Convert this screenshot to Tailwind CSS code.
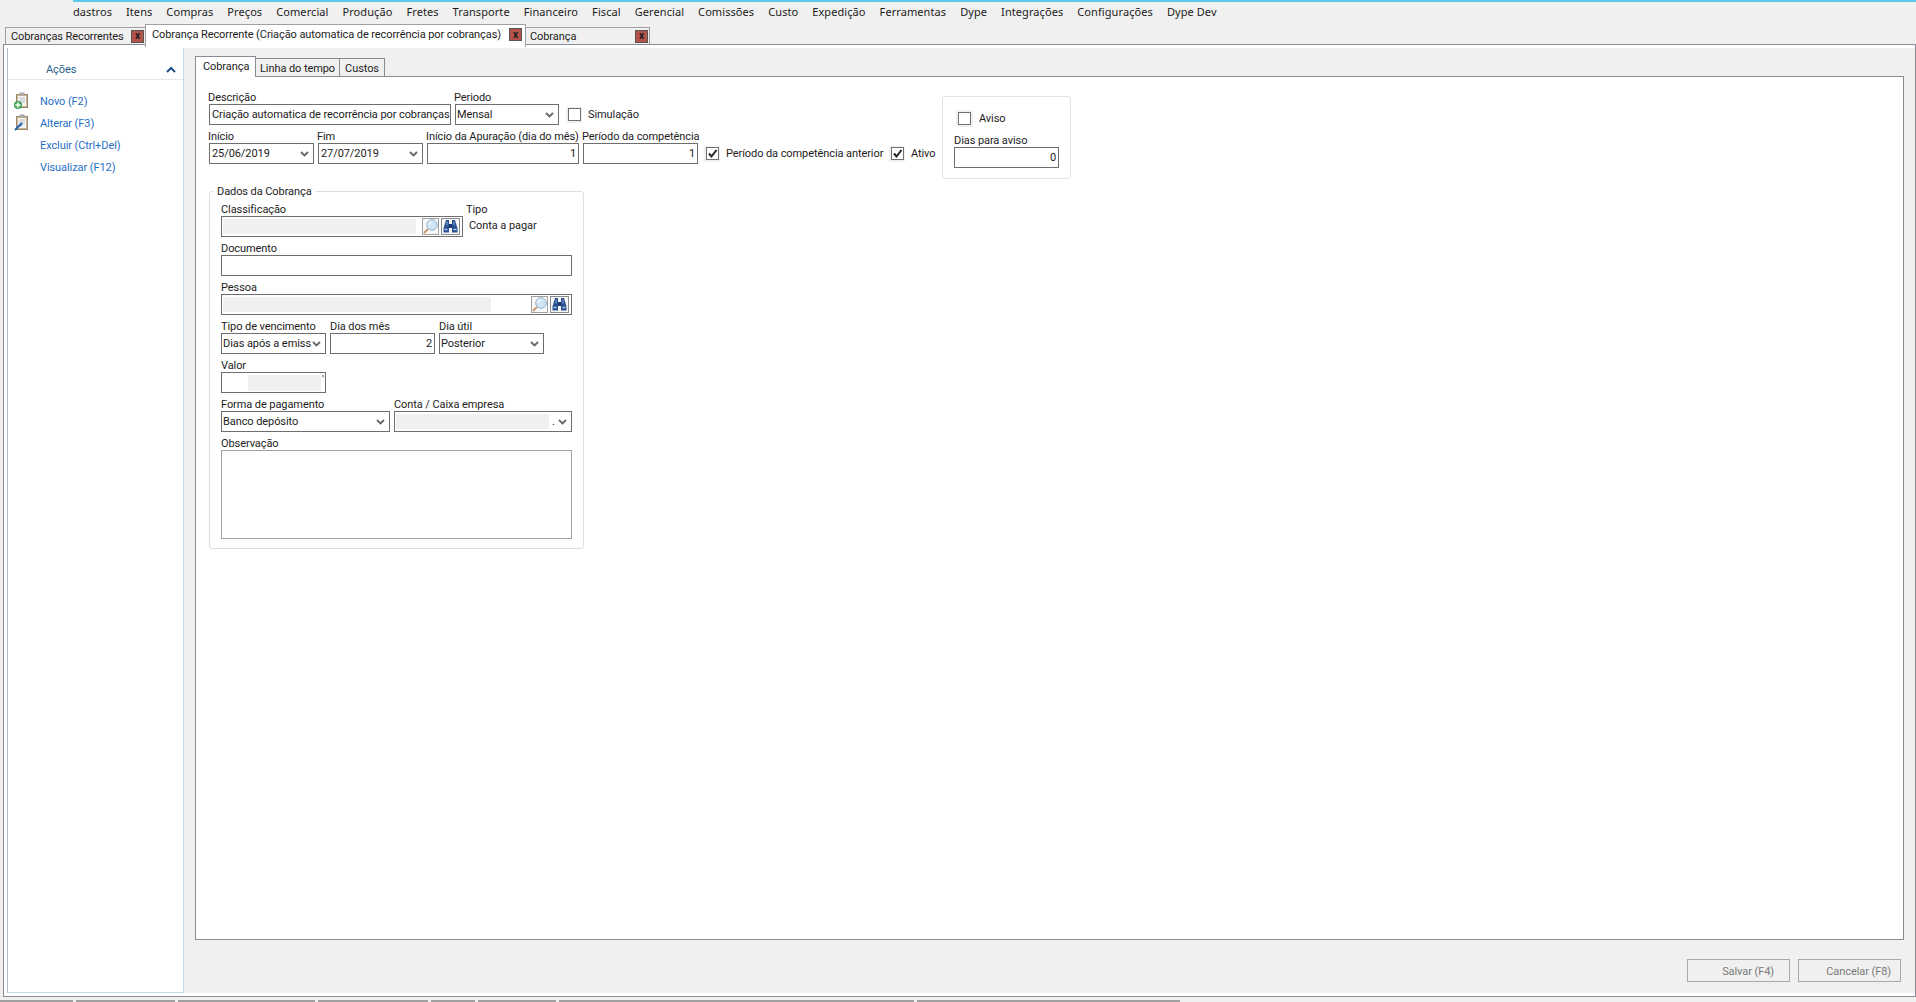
<!DOCTYPE html>
<html lang="pt-BR">
<head>
<meta charset="UTF-8">
<title>Cobrança Recorrente</title>
<script src="https://cdn.jsdelivr.net/npm/@tailwindcss/browser@4"></script>
</head>
<body class="w-[1916px] h-[1002px] overflow-hidden bg-[#f0f0f0] font-['Roboto',sans-serif] text-[11px] leading-[14px] tracking-[-0.08px] text-[#1c1c1c]">

<svg class="hidden">
  <symbol id="chev" viewBox="0 0 9 6"><path d="M1 1l3.500 3.500L8 1" fill="none" stroke="#666" stroke-width="1.800"/></symbol>
  <symbol id="tick" viewBox="0 0 11 11"><path d="M2 5.500l2.500 3L9.500 2" fill="none" stroke="#222" stroke-width="2"/></symbol>
  <symbol id="lupa" viewBox="0 0 15 15"><path d="M5 10L1 14" stroke="#c9966a" stroke-width="1.800"/><circle cx="9" cy="6" r="5.300" fill="#cfe5f6" stroke="#93b3cd"/><path d="M5.800 6a3.200 3.200 0 0 1 3.200-3.200" fill="none" stroke="#fff"/></symbol>
  <symbol id="bino" viewBox="0 0 17 15"><path d="M4 1h3v12.500H1.500v-4z" fill="#2a4f8f"/><path d="M10 1h3l2.500 8.500v4H10z" fill="#2a4f8f"/><rect x="7" y="5" width="3" height="4" fill="#1d3a70"/><path d="M2.500 10.500h3M11.500 10.500h3" stroke="#a9c8ec" stroke-width="1.500"/><path d="M5 2.500v4M12 2.500v4" stroke="#86abdc"/></symbol>
  <symbol id="clip" viewBox="0 0 14 16"><rect x="1.500" y="2.500" width="11" height="13" fill="#c9b48f" stroke="#9a8a6c"/><rect x="3" y="4" width="8" height="10" fill="#f6f6f2"/><rect x="4.500" y="0.500" width="5" height="3" fill="#a8a8a8"/><path d="M4 6h6M4 8h6M4 10h6M4 12h4" stroke="#bcc4cc"/></symbol>
</svg>

<!-- menu -->
<div class="h-[24px] ml-[73px] border-t-2 border-[#5ec8e8] pb-[2px] flex items-center gap-[14px] whitespace-nowrap font-['Noto_Sans',sans-serif] tracking-[0.08px]">
  <span>dastros</span><span>Itens</span><span>Compras</span><span>Preços</span><span>Comercial</span><span>Produção</span><span>Fretes</span><span>Transporte</span><span>Financeiro</span><span>Fiscal</span><span>Gerencial</span><span>Comissões</span><span>Custo</span><span>Expedição</span><span>Ferramentas</span><span>Dype</span><span>Integrações</span><span>Configurações</span><span>Dype Dev</span>
</div>

<!-- document tabs -->
<div class="h-[20px] pl-[5px] flex items-end relative z-10 whitespace-nowrap">
  <div class="w-[140px] h-[17px] border-l border-t border-[#a0a0a0] flex items-center pl-[5px]">
    <span class="w-[120px] pt-[2px]">Cobranças Recorrentes</span>
    <span class="w-[13px] h-[13px] bg-[#b5524b] border border-[#555] flex items-center justify-center text-[10px] font-bold leading-[10px]">x</span>
  </div>
  <div class="w-[381px] h-[23px] -mb-[3px] bg-white border-l border-r border-t border-[#a0a0a0] flex items-start pl-[6px] pt-[3px]">
    <span class="w-[357px]">Cobrança Recorrente (Criação automatica de recorrência por cobranças)</span>
    <span class="w-[13px] h-[13px] bg-[#b5524b] border border-[#555] flex items-center justify-center text-[10px] font-bold leading-[10px]">x</span>
  </div>
  <div class="w-[124px] h-[17px] border-r border-t border-[#a0a0a0] flex items-center pl-[4px]">
    <span class="w-[105px] pt-[2px]">Cobrança</span>
    <span class="w-[13px] h-[13px] bg-[#b5524b] border border-[#555] flex items-center justify-center text-[10px] font-bold leading-[10px]">x</span>
  </div>
</div>

<!-- frame -->
<div class="h-[953px] ml-[3px] border border-[#8a8a94] bg-white pl-[3px] pt-[3px] pb-[3px]">
  <div class="h-full bg-[#f0f0f0] flex">

    <!-- actions panel -->
    <aside class="w-[177px] h-full bg-white border-l border-r border-b border-l-[#b0bcc8] border-r-[#c5d8e5] border-b-[#c5d8e5] pt-[11px]">
      <div class="h-[21px] border-b border-[#e3e8ee] flex items-center justify-between pl-[38px] pr-[7px] text-[#2b5f8a]">
        <span class="pt-[2px]">Ações</span>
        <svg class="w-[10px] h-[7px]" viewBox="0 0 10 7"><path d="M1 6l4-4 4 4" fill="none" stroke="#1d4f86" stroke-width="2"/></svg>
      </div>
      <ul class="mt-[10px] text-[#1f6fc4]">
        <li class="h-[22px] flex items-center pl-[7px]">
          <span class="relative w-[14px] h-[16px] mr-[11px] -mt-[2px]"><svg class="w-[14px] h-[16px]"><use href="#clip"/></svg>
            <svg class="absolute -left-[1px] -bottom-[1px] w-[8px] h-[8px]" viewBox="0 0 8 8"><circle cx="4" cy="4" r="3.800" fill="#48b05c" stroke="#2b7d3c" stroke-width=".5"/><path d="M4 1.500v5M1.500 4h5" stroke="#fff" stroke-width="1.500"/></svg></span>
          <span class="pt-[2px]">Novo (F2)</span>
        </li>
        <li class="h-[22px] flex items-center pl-[7px]">
          <span class="relative w-[14px] h-[16px] mr-[11px] -mt-[2px]"><svg class="w-[14px] h-[16px]"><use href="#clip"/></svg>
            <svg class="absolute -left-[1px] -bottom-[1px] w-[9px] h-[9px]" viewBox="0 0 9 9"><path d="M1 8L8 1" stroke="#1f5fb0" stroke-width="2"/></svg></span>
          <span class="pt-[2px]">Alterar (F3)</span>
        </li>
        <li class="h-[22px] flex items-center pl-[32px]"><span class="pt-[2px]">Excluir (Ctrl+Del)</span></li>
        <li class="h-[22px] flex items-center pl-[32px]"><span class="pt-[2px]">Visualizar (F12)</span></li>
      </ul>
    </aside>

    <!-- main -->
    <main class="flex-1 pl-[11px] pr-[11px] pt-[8px]">
      <div class="h-[20px] flex items-end relative z-10 whitespace-nowrap">
        <div class="w-[61px] h-[21px] -mb-[1px] bg-white border-l border-t border-r border-[#8a8a94] pl-[7px] pt-[3px]">Cobrança</div>
        <div class="w-[84px] h-[18px] border-t border-r border-[#8a8a94] pt-[2px] flex items-center justify-center">Linha do tempo</div>
        <div class="w-[45px] h-[18px] border-t border-r border-[#8a8a94] pt-[2px] flex items-center justify-center">Custos</div>
      </div>

      <section class="h-[864px] border border-[#8a8a94] bg-white pl-[13px] pt-[13px]">
        <div class="flex items-start">
          <div class="w-[733px]">
            <div class="flex gap-[4px] items-end">
              <div class="w-[242px]"><label class="block h-[14px] leading-[16px] -ml-px whitespace-nowrap">Descrição</label><div class="h-[21px] border border-[#6e6e6e] px-[2px] flex items-center whitespace-nowrap overflow-hidden">Criação automatica de recorrência por cobranças</div></div>
              <div class="w-[104px]"><label class="block h-[14px] leading-[16px] -ml-px whitespace-nowrap">Periodo</label><div class="h-[21px] border border-[#6e6e6e] pl-[1px] pr-[4px] flex items-center justify-between">Mensal<svg class="w-[9px] h-[6px]"><use href="#chev"/></svg></div></div>
              <div class="h-[21px] flex items-center ml-[3px]">
                <span class="w-4 h-4 bg-[#f0f0f0] flex items-center justify-center"><span class="w-[13px] h-[13px] bg-white border border-[#707070]"></span></span>
                <span class="ml-[6px]">Simulação</span>
              </div>
            </div>
            <div class="flex gap-[4px] items-end mt-[4px] whitespace-nowrap">
              <div class="w-[105px]"><label class="block h-[14px] leading-[16px] -ml-px">Início</label><div class="h-[21px] border border-[#6e6e6e] pl-[2px] pr-[4px] flex items-center justify-between">25/06/2019<svg class="w-[9px] h-[6px]"><use href="#chev"/></svg></div></div>
              <div class="w-[105px]"><label class="block h-[14px] leading-[16px] -ml-px">Fim</label><div class="h-[21px] border border-[#6e6e6e] pl-[2px] pr-[4px] flex items-center justify-between">27/07/2019<svg class="w-[9px] h-[6px]"><use href="#chev"/></svg></div></div>
              <div class="w-[152px]"><label class="block h-[14px] leading-[16px] -ml-px">Início da Apuração (dia do mês)</label><div class="h-[21px] border border-[#6e6e6e] px-[2px] flex items-center justify-end">1</div></div>
              <div class="w-[115px]"><label class="block h-[14px] leading-[16px] -ml-px">Período da competência</label><div class="h-[21px] border border-[#6e6e6e] px-[2px] flex items-center justify-end">1</div></div>
              <div class="h-[21px] flex items-center ml-[2px]">
                <span class="w-4 h-4 bg-[#f0f0f0] flex items-center justify-center"><span class="w-[13px] h-[13px] bg-white border border-[#707070] flex"><svg class="w-[11px] h-[11px]"><use href="#tick"/></svg></span></span>
                <span class="ml-[6px] w-[163px]">Período da competência anterior</span>
                <span class="w-4 h-4 bg-[#f0f0f0] flex items-center justify-center"><span class="w-[13px] h-[13px] bg-white border border-[#707070] flex"><svg class="w-[11px] h-[11px]"><use href="#tick"/></svg></span></span>
                <span class="ml-[6px]">Ativo</span>
              </div>
            </div>

            <fieldset class="w-[375px] mt-[20px] border border-[#d8dfe6] rounded-[3px] pl-[11px] pr-[11px] pb-[9px] pt-[4px]">
              <legend class="-ml-[8px] px-[4px] h-[14px] leading-[16px]">Dados da Cobrança</legend>
              <div class="flex flex-col gap-[4px]">
                <div class="flex gap-[3px]">
                  <div class="w-[242px]"><label class="block h-[14px] leading-[16px]">Classificação</label>
                    <div class="h-[21px] border border-[#6e6e6e] flex items-center pl-[1px]">
                      <span class="w-[193px] h-[15px] bg-[#f0f0f0]"></span>
                      <span class="ml-[6px] w-[17px] h-[17px] border border-[#a0a0a0] bg-[#f8f8f8] flex"><svg class="w-[15px] h-[15px]"><use href="#lupa"/></svg></span>
                      <span class="ml-[2px] w-[19px] h-[17px] border border-[#8a8a8a] bg-[#f8f8f8] flex"><svg class="w-[17px] h-[15px]"><use href="#bino"/></svg></span>
                    </div>
                  </div>
                  <div><label class="block h-[14px] leading-[16px]">Tipo</label><div class="h-[21px] pl-[3px] pb-px flex items-center whitespace-nowrap">Conta a pagar</div></div>
                </div>
                <div><label class="block h-[14px] leading-[16px]">Documento</label><div class="h-[21px] border border-[#6e6e6e]"></div></div>
                <div><label class="block h-[14px] leading-[16px]">Pessoa</label>
                  <div class="h-[21px] border border-[#6e6e6e] flex items-center pl-[1px]">
                    <span class="w-[268px] h-[15px] bg-[#f0f0f0]"></span>
                    <span class="ml-[40px] w-[17px] h-[17px] border border-[#a0a0a0] bg-[#f8f8f8] flex"><svg class="w-[15px] h-[15px]"><use href="#lupa"/></svg></span>
                    <span class="ml-[2px] w-[19px] h-[17px] border border-[#8a8a8a] bg-[#f8f8f8] flex"><svg class="w-[17px] h-[15px]"><use href="#bino"/></svg></span>
                  </div>
                </div>
                <div class="flex gap-[4px] whitespace-nowrap">
                  <div class="w-[105px]"><label class="block h-[14px] leading-[16px]">Tipo de vencimento</label><div class="h-[21px] border border-[#6e6e6e] pl-[1px] pr-[4px] flex items-center justify-between">Dias após a emiss<svg class="w-[9px] h-[6px]"><use href="#chev"/></svg></div></div>
                  <div class="w-[105px]"><label class="block h-[14px] leading-[16px]">Dia dos mês</label><div class="h-[21px] border border-[#6e6e6e] px-[2px] flex items-center justify-end">2</div></div>
                  <div class="w-[105px]"><label class="block h-[14px] leading-[16px]">Dia útil</label><div class="h-[21px] border border-[#6e6e6e] pl-[1px] pr-[4px] flex items-center justify-between">Posterior<svg class="w-[9px] h-[6px]"><use href="#chev"/></svg></div></div>
                </div>
                <div class="w-[105px]"><label class="block h-[14px] leading-[16px]">Valor</label><div class="h-[21px] border border-[#6e6e6e] pl-[26px] flex items-center"><span class="w-[73px] h-[16px] bg-[#f0f0f0]"></span><span class="ml-px mb-[6px] leading-[6px]">'</span></div></div>
                <div class="flex gap-[4px] whitespace-nowrap">
                  <div class="w-[169px]"><label class="block h-[14px] leading-[16px]">Forma de pagamento</label><div class="h-[21px] border border-[#6e6e6e] pl-[1px] pr-[4px] flex items-center justify-between">Banco depósito<svg class="w-[9px] h-[6px]"><use href="#chev"/></svg></div></div>
                  <div class="w-[178px]"><label class="block h-[14px] leading-[16px]">Conta / Caixa empresa</label><div class="h-[21px] border border-[#6e6e6e] pl-[1px] pr-[4px] flex items-center justify-between"><span class="w-[153px] h-[15px] bg-[#f0f0f0]"></span><span>.</span><svg class="w-[9px] h-[6px]"><use href="#chev"/></svg></div></div>
                </div>
                <div><label class="block h-[14px] leading-[16px]">Observação</label><div class="h-[89px] border border-[#a0a0a0]"></div></div>
              </div>
            </fieldset>
          </div>

          <div class="w-[129px] h-[83px] mt-[6px] border border-[#dde3e8] rounded-[3px] pl-[11px] pt-[13px]">
            <div class="flex items-center h-[17px] ml-[2px]">
              <span class="w-[17px] h-[17px] bg-[#f0f0f0] flex items-center justify-center"><span class="w-[13px] h-[13px] bg-white border border-[#707070]"></span></span>
              <span class="ml-[6px]">Aviso</span>
            </div>
            <label class="block h-[14px] leading-[16px] mt-[6px] whitespace-nowrap">Dias para aviso</label>
            <div class="w-[105px] h-[21px] border border-[#6e6e6e] px-[2px] flex items-center justify-end">0</div>
          </div>
        </div>
      </section>

      <div class="mt-[19px] pr-[3px] flex justify-end gap-[8px] text-[#7a7a7a]">
        <div class="w-[103px] h-[23px] border border-[#a8a8a8] pt-[2px] flex items-center justify-end pr-[15px]">Salvar (F4)</div>
        <div class="w-[103px] h-[23px] border border-[#a8a8a8] pt-[2px] flex items-center justify-end pr-[9px]">Cancelar (F8)</div>
      </div>
    </main>
  </div>
</div>

<!-- taskbar slivers -->
<div class="mt-[3px] h-[2px] flex gap-[3px]">
  <span class="w-[73px] bg-[#a0a0a0]"></span><span class="w-[99px] bg-[#a0a0a0]"></span><span class="w-[137px] bg-[#a0a0a0]"></span><span class="w-[110px] bg-[#a0a0a0]"></span><span class="w-[44px] bg-[#a0a0a0]"></span><span class="w-[78px] bg-[#a0a0a0]"></span><span class="w-[355px] bg-[#a0a0a0]"></span><span class="w-[263px] bg-[#a0a0a0]"></span>
</div>
</body>
</html>
